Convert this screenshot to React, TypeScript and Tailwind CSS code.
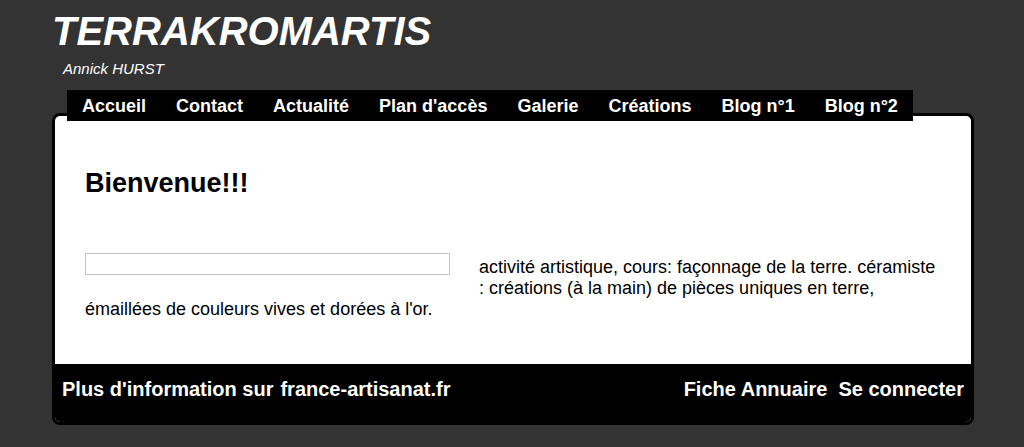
export default function App() {
  const navItems = [
    "Accueil",
    "Contact",
    "Actualité",
    "Plan d'accès",
    "Galerie",
    "Créations",
    "Blog n°1",
    "Blog n°2",
  ];

  return (
    <div className="min-h-[447px] w-full bg-[#333333] font-['Liberation_Sans',Arial,sans-serif] pt-[8px] pb-[22px]">
      {/* header */}
      <div className="pl-[52px]">
        <h1 className="text-[40px] leading-[46px] font-bold italic text-white">TERRAKROMARTIS</h1>
        <p className="mt-[6px] pl-[11px] text-[15px] leading-[17px] italic text-white">Annick HURST</p>
      </div>

      <div className="ml-[52px] w-[922px]">
        <nav className="relative z-10 mt-[13px] -mb-[8px] ml-[15px] flex h-[31px] w-fit bg-black pt-[1px]">
          {navItems.map((item) => (
            <a key={item} href="#" className="px-[15px] text-[18px] leading-[30px] font-bold text-white">
              {item}
            </a>
          ))}
        </nav>

        <div className="overflow-hidden rounded-[8px] border-[3px] border-black bg-white">
          <div className="px-[30px] pt-[52px] pb-[44px] text-black">
            <h2 className="text-[27px] leading-[31px] font-bold">Bienvenue!!!</h2>

            <div className="mt-[54px] flex items-start gap-[29px]">
              <div className="h-[22px] w-[365px] shrink-0 border border-[#c4c4c4]" />
              <p className="w-[462px] pt-[4px] text-[18px] leading-[21px]">
                activité artistique, cours: façonnage de la terre. céramiste : créations (à la main) de pièces uniques en terre,
              </p>
            </div>
            <p className="text-[18px] leading-[21px]">émaillées de couleurs vives et dorées à l'or.</p>
          </div>

          <div className="flex h-[58px] items-start justify-between bg-black px-[7px] pt-[14px] text-[20px] leading-[23px] font-bold text-white">
            <div className="flex gap-[7px]">
              <span>Plus d'information sur</span>
              <a href="#">france-artisanat.fr</a>
            </div>
            <div className="flex gap-[11px]">
              <a href="#">Fiche Annuaire</a>
              <a href="#">Se connecter</a>
            </div>
          </div>
        </div>
      </div>
    </div>
  );
}
